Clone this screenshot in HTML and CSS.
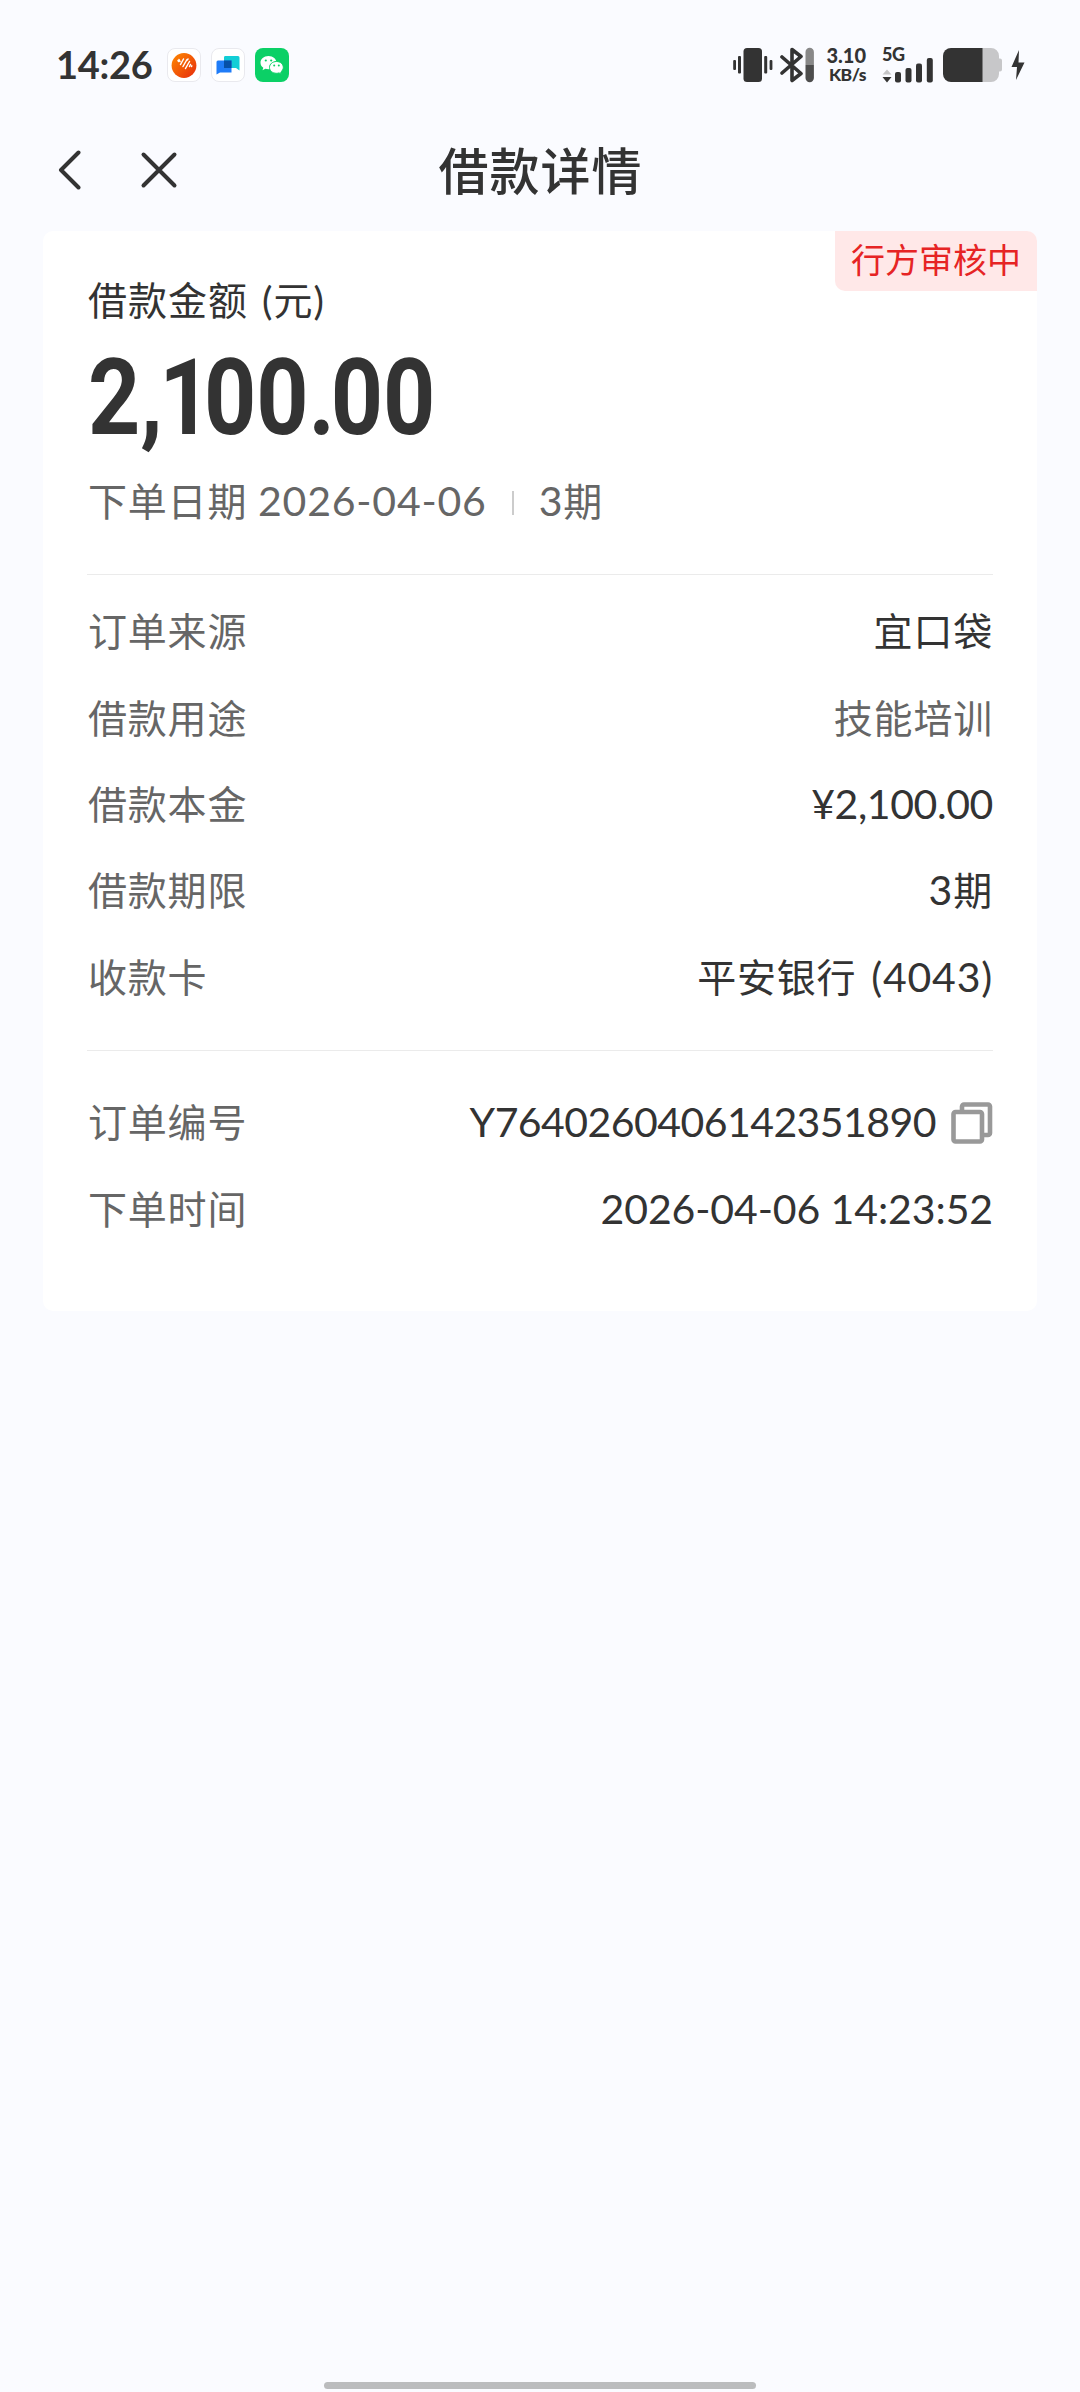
FILE: index.html
```html
<!DOCTYPE html>
<html lang="zh-CN">
<head>
  <meta charset="UTF-8">
  <title>借款详情</title>
  <link rel="stylesheet" href="styles.css">
</head>
<body>

<!-- Status bar -->
<div class="status-bar">
  <span class="clock">14:26</span>
  <div class="apps">
    <svg class="app" viewBox="0 0 34 34">
      <defs>
        <linearGradient id="orange" x1="0" y1="0" x2="1" y2="1">
          <stop offset="0" stop-color="#ff8a00"/>
          <stop offset="1" stop-color="#e62a0c"/>
        </linearGradient>
      </defs>
      <rect x="0.5" y="0.5" width="33" height="33" rx="7.5" fill="#fff" stroke="#e9e9ee"/>
      <circle cx="17" cy="17.5" r="12.4" fill="url(#orange)"/>
      <path d="M11 12.500l.5 1M13.500 16.500L16.500 11M16 18.500L20 11.500M18.500 20.500L22.500 13.500M12 11.500l1 2M20.500 12l.5-1M22.500 18.500l1-2M24.500 18.500l.3-.6" stroke="#fff" stroke-width="1.500" stroke-linecap="round" fill="none"/>
    </svg>
    <svg class="app" viewBox="0 0 34 34">
      <rect x="0.5" y="0.5" width="33" height="33" rx="7.5" fill="#fff" stroke="#e9e9ee"/>
      <path d="M14 8h13a1.5 1.5 0 0 1 1.5 1.5v13L25 20H13V9.500a1.500 1.500 0 0 1 1-1.500z" fill="#12ced6"/>
      <path d="M7 12.500h13.500V24.500H9L5.500 26.500V14a1.500 1.500 0 0 1 1.500-1.500z" fill="#1f7cf8"/>
      <rect x="13" y="12.500" width="7.500" height="7.500" fill="#0650a8"/>
    </svg>
    <svg class="app" viewBox="0 0 34 34">
      <rect width="34" height="34" rx="8" fill="#0bd066"/>
      <path d="M13.500 8C8.800 8 5.500 11 5.500 14.700c0 2.100 1.100 3.900 2.800 5.100l-.8 2.500 2.900-1.500c1 .3 2 .4 3.100.4 4.600 0 8-2.900 8-6.500S18.100 8 13.500 8z" fill="#fff"/>
      <path d="M21.500 13.500c-4 0-7 2.600-7 5.900s3 5.900 7 5.900c.9 0 1.700-.1 2.500-.4l2.500 1.300-.7-2.200c1.500-1.100 2.500-2.700 2.500-4.600 0-3.300-2.800-5.900-6.800-5.900z" fill="#fff" stroke="#0bd066" stroke-width="1"/>
      <g fill="#0bd066">
        <circle cx="10.800" cy="12.500" r="1.100"/><circle cx="16.200" cy="12.500" r="1.100"/>
        <circle cx="19.200" cy="17.500" r="1"/><circle cx="23.800" cy="17.500" r="1"/>
      </g>
    </svg>
  </div>

  <div class="system">
    <svg class="vibrate" viewBox="0 0 40 36" fill="#333">
      <rect x="10.500" y="1" width="18.500" height="34" rx="3.500"/>
      <rect x="0.200" y="13" width="2.800" height="10" rx="1"/>
      <rect x="5" y="9" width="3" height="17.500" rx="1"/>
      <rect x="31.200" y="9" width="3" height="17.500" rx="1"/>
      <rect x="36.600" y="13" width="2.800" height="10" rx="1"/>
    </svg>
    <svg class="bluetooth" viewBox="0 0 34 36">
      <path d="M2 10L21 26.500L12 33.500V2.500L21 9.500L2 26" fill="none" stroke="#333" stroke-width="3.600" stroke-linecap="round" stroke-linejoin="round"/>
      <path d="M25.500 18V5a4.200 4.200 0 0 1 8.400 0V18z" fill="#888"/>
      <path d="M25.500 18V31a4.200 4.200 0 0 0 8.400 0V18z" fill="#4d4d4d"/>
    </svg>
    <div class="speed">
      <span class="rate">3.10</span>
      <span class="unit">KB/s</span>
    </div>
    <div class="network">
      <span class="net-type">5G</span>
      <svg class="signal" viewBox="0 0 52 26" fill="#333">
        <path d="M0.500 17.500L5 12.500L9.500 17.500z" fill="#c4c4c6"/>
        <path d="M0.500 20L5 25.500L9.500 20z"/>
        <rect x="13" y="15" width="6" height="10.500" rx="2"/>
        <rect x="23.500" y="11" width="6" height="14.500" rx="2"/>
        <rect x="34" y="6.500" width="6" height="19" rx="2"/>
        <rect x="44.800" y="1" width="6" height="24.500" rx="2"/>
      </svg>
    </div>
    <svg class="battery" viewBox="0 0 60 34">
      <path d="M39 0h9a8 8 0 0 1 8 8v2.500h1a2 2 0 0 1 2 2v9a2 2 0 0 1-2 2h-1V26a8 8 0 0 1-8 8h-9z" fill="#c7c7c9"/>
      <path d="M8 0h31.500v34H8a8 8 0 0 1-8-8V8a8 8 0 0 1 8-8z" fill="#333"/>
    </svg>
    <svg class="bolt" viewBox="0 0 14 30">
      <path d="M8 0L0.500 17H6L5 30L13.500 12.500H7.500z" fill="#333"/>
    </svg>
  </div>
</div>

<!-- Navbar -->
<div class="navbar">
  <div class="nav-actions">
    <svg class="back" viewBox="0 0 24 40"><path d="M20.500 2.500L3 20L20.500 37.500"/></svg>
    <svg class="close" viewBox="0 0 38 38"><path d="M3.500 3.500L34.500 34.500M34.500 3.500L3.500 34.500"/></svg>
  </div>
  <h1>借款详情</h1>
</div>

<!-- Loan card -->
<div class="card">
  <span class="badge">行方审核中</span>

  <div class="summary">
    <div class="summary-label">借款金额 (元)</div>
    <div class="amount">2<span class="comma">,</span><span class="one">1</span>00<span class="dot">.</span>00</div>
    <div class="summary-date">
      <span>下单日期 <span class="num">2026-04-06</span></span>
      <i class="separator"></i>
      <span><span class="num">3</span>期</span>
    </div>
  </div>

  <div class="details">
    <div class="row"><span class="label">订单来源</span><span class="value">宜口袋</span></div>
    <div class="row"><span class="label">借款用途</span><span class="value muted">技能培训</span></div>
    <div class="row"><span class="label">借款本金</span><span class="value money">¥2,100.00</span></div>
    <div class="row"><span class="label">借款期限</span><span class="value"><span class="num">3</span>期</span></div>
    <div class="row"><span class="label">收款卡</span><span class="value bank">平安银行 <span class="num">(4043)</span></span></div>
  </div>

  <div class="details order">
    <div class="row">
      <span class="label">订单编号</span>
      <span class="value order-no">
        <span>Y7640260406142351890</span>
        <svg class="copy" viewBox="0 0 42 42"><path d="M11 9V4.500a2 2 0 0 1 2-2H37a2 2 0 0 1 2 2V31a2 2 0 0 1-2 2H32"/><rect x="2.500" y="10" width="28.500" height="29.500" rx="2"/></svg>
      </span>
    </div>
    <div class="row"><span class="label">下单时间</span><span class="value time">2026-04-06 14:23:52</span></div>
  </div>
</div>

<div class="home-indicator"></div>

</body>
</html>
```
FILE: styles.css
```css
* {
  box-sizing: border-box;
}
body {
  margin: 0;
  height: 2392px;
  display: flex;
  flex-direction: column;
  font-family: Lato, 'Noto Sans CJK SC', sans-serif;
  background: #fafbff;
  color: #333;
  overflow: hidden;
}
svg {
  display: block;
  flex: none;
}

/* status bar */
.status-bar {
  height: 130px;
  padding: 0 55px 0 56px;
  display: flex;
  align-items: center;
}
.clock {
  font-size: 38px;
  font-weight: 700;
  line-height: 40px;
  letter-spacing: -0.3px;
  width: 111px;
  padding-bottom: 2px;
}
.apps {
  display: flex;
  gap: 10px;
}
.app {
  width: 34px;
  height: 34px;
}
.system {
  margin-left: auto;
  display: flex;
  align-items: center;
}
.vibrate {
  width: 40px;
  height: 36px;
}
.bluetooth {
  width: 34px;
  height: 36px;
  margin-left: 7px;
}
.speed {
  width: 38px;
  margin-left: 14px;
  display: flex;
  flex-direction: column;
  align-items: flex-end;
  font-weight: 900;
  white-space: nowrap;
}
.rate {
  font-size: 20px;
  line-height: 19px;
}
.unit {
  font-size: 17.5px;
  line-height: 20px;
  letter-spacing: -0.5px;
}
.network {
  margin-left: 16px;
  display: flex;
  flex-direction: column;
}
.net-type {
  font-size: 18px;
  font-weight: 900;
  line-height: 14px;
  letter-spacing: -0.5px;
  height: 10px;
}
.signal {
  width: 52px;
  height: 26px;
}
.battery {
  width: 60px;
  height: 34px;
  margin-left: 9px;
}
.bolt {
  width: 14px;
  height: 30px;
  margin-left: 8px;
}

/* navbar */
.navbar {
  height: 101px;
  padding: 1px 0 20px 1px;
  position: relative;
  display: flex;
  align-items: center;
  justify-content: center;
}
.nav-actions {
  position: absolute;
  left: 58px;
  top: 20px;
  display: flex;
  align-items: center;
  gap: 58px;
}
.nav-actions svg {
  fill: none;
  stroke: #333;
  stroke-width: 4;
  stroke-linecap: round;
  stroke-linejoin: round;
}
.back {
  width: 24px;
  height: 40px;
}
.close {
  width: 38px;
  height: 38px;
}
h1 {
  margin: 0;
  font-size: 50px;
  font-weight: 500;
  line-height: 70px;
  letter-spacing: 1px;
}

/* card */
.card {
  position: relative;
  margin: 0 43px;
  height: 1080px;
  padding: 0 44px;
  background: #fff;
  border-radius: 10px;
}
.badge {
  position: absolute;
  top: 0;
  right: 0;
  width: 202px;
  height: 60px;
  line-height: 58px;
  text-align: center;
  font-size: 34px;
  color: #e62424;
  background: #ffe8e8;
  border-radius: 0 10px 0 10px;
}
.summary {
  height: 344px;
  padding: 41px 0 0 1px;
  border-bottom: 1px solid #ebebeb;
}
.summary-label {
  font-size: 39px;
  line-height: 56px;
  letter-spacing: 1px;
  word-spacing: 3px;
}
.amount {
  font-family: Roboto, sans-serif;
  font-weight: 700;
  font-size: 106px;
  line-height: 124px;
  margin-top: 8px;
  transform: scaleX(0.86);
  transform-origin: left;
}
.comma {
  letter-spacing: -4px;
}
.one {
  letter-spacing: -9px;
}
.dot {
  letter-spacing: -5px;
}
.summary-date {
  display: flex;
  align-items: center;
  margin-top: 11px;
  font-size: 39px;
  line-height: 60px;
  letter-spacing: 0.8px;
  color: #666;
}
.num {
  font-size: 41px;
}
.separator {
  width: 2px;
  height: 24px;
  margin: 3px 25px 0;
  background: #ccc;
}
.details {
  height: 476px;
  padding: 11px 0 0 1px;
  border-bottom: 1px solid #ebebeb;
}
.order {
  height: auto;
  padding-top: 26px;
  border-bottom: none;
}
.row {
  height: 86.4px;
  display: flex;
  align-items: center;
  justify-content: space-between;
  font-size: 39px;
  letter-spacing: 0.8px;
}
.label {
  color: #666;
}
.value {
  white-space: nowrap;
}
.muted {
  color: #666;
}
.bank {
  word-spacing: 4px;
}
.money,
.time,
.order-no {
  font-size: 41px;
  padding-top: 3px;
}
.money {
  letter-spacing: -0.4px;
}
.time {
  letter-spacing: -0.1px;
}
.order-no {
  display: flex;
  align-items: center;
  letter-spacing: -0.55px;
}
.copy {
  width: 42px;
  height: 42px;
  margin: 2px 0 0 15px;
  fill: none;
  stroke: #999;
  stroke-width: 4.6;
}

.home-indicator {
  width: 432px;
  height: 7px;
  margin: auto auto 3px;
  border-radius: 4px;
  background: #bbbcbe;
}
```
